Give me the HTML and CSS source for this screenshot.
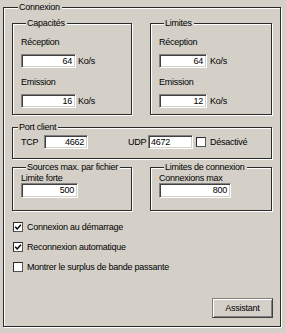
FILE: index.html
```html
<!DOCTYPE html>
<html lang="fr">
<head>
<meta charset="utf-8">
<title>Connexion</title>
<link rel="stylesheet" href="styles.css">
</head>
<body>
<div class="dialog">
  <div class="group outer">
    <span class="title">Connexion</span>

    <div class="row2 top">
      <div class="group speed">
        <span class="title">Capacités</span>
        <div class="label l1">Réception</div>
        <div class="fieldrow"><span class="field num w55">64</span><span class="unit">Ko/s</span></div>
        <div class="label l2">Emission</div>
        <div class="fieldrow"><span class="field num w55">16</span><span class="unit">Ko/s</span></div>
      </div>
      <div class="group speed">
        <span class="title">Limites</span>
        <div class="label l1">Réception</div>
        <div class="fieldrow"><span class="field num w48">64</span><span class="unit u2">Ko/s</span></div>
        <div class="label l2">Emission</div>
        <div class="fieldrow"><span class="field num w48">12</span><span class="unit u2">Ko/s</span></div>
      </div>
    </div>

    <div class="group port">
      <span class="title">Port client</span>
      <div class="portrow">
        <span class="plabel">TCP</span>
        <span class="field num w44">4662</span>
        <span class="plabel udp">UDP</span>
        <span class="field left w45">4672</span>
        <span class="check"></span>
        <span class="ctext">Désactivé</span>
      </div>
    </div>

    <div class="row2 bottom">
      <div class="group small">
        <span class="title">Sources max. par fichier</span>
        <div class="slabel">Limite forte</div>
        <span class="field num w57">500</span>
      </div>
      <div class="group small">
        <span class="title">Limites de connexion</span>
        <div class="slabel">Connexions max</div>
        <span class="field num w72">800</span>
      </div>
    </div>

    <div class="checks">
      <div class="crow"><span class="check on"><svg viewBox="0 0 8 8" width="8" height="8"><path d="M1.2 3.8 L3.2 5.9 L6.9 1.8" fill="none" stroke="#000" stroke-width="1.5"/></svg></span><span class="ctext">Connexion au démarrage</span></div>
      <div class="crow"><span class="check on"><svg viewBox="0 0 8 8" width="8" height="8"><path d="M1.2 3.8 L3.2 5.9 L6.9 1.8" fill="none" stroke="#000" stroke-width="1.5"/></svg></span><span class="ctext">Reconnexion automatique</span></div>
      <div class="crow"><span class="check"></span><span class="ctext">Montrer le surplus de bande passante</span></div>
    </div>

    <div class="actions"><span class="btn">Assistant</span></div>
  </div>
</div>
</body>
</html>
```

FILE: styles.css
```css
html, body {
  margin: 0;
  padding: 0;
}
body {
  width: 286px;
  height: 333px;
  overflow: hidden;
  background: #d4d0c8;
  color: #000;
  font-family: "Liberation Sans", Arial, sans-serif;
  font-size: 9px;
  line-height: 11px;
  letter-spacing: -0.25px;
}
.dialog {
  padding: 7px 0 0 3px;
}
.group {
  box-sizing: border-box;
  border: 1px solid #2a2a2a;
  box-shadow: inset 1px 1px 0 #fff, 1px 1px 0 #fff;
}
.title {
  display: block;
  width: fit-content;
  height: 11px;
  margin: -6px 0 0 5px;
  padding: 0 2px 0 1px;
  background: #d4d0c8;
  white-space: nowrap;
}
.outer {
  width: 278px;
  height: 320px;
  padding: 0 8px;
  display: flex;
  flex-direction: column;
}
.outer > .title {
  margin-left: 6px;
}
.row2 {
  display: grid;
  grid-template-columns: 120px 122px;
  column-gap: 18px;
}
.row2.top {
  margin-top: 10px;
}
.speed {
  height: 92px;
  padding-left: 8px;
}
.label.l1 { margin-top: 8px; }
.label.l2 { margin-top: 9px; }
.fieldrow {
  display: flex;
  align-items: center;
  margin-top: 6px;
}
.field {
  display: block;
  box-sizing: border-box;
  height: 14px;
  line-height: 12px;
  background: #fff;
  border: 1px solid;
  border-color: #808080 #fff #fff #808080;
  box-shadow: inset 1px 1px 0 #404040, inset -1px -1px 0 #d4d0c8;
  white-space: nowrap;
}
.field.num { text-align: right; padding-right: 3px; }
.field.left { text-align: left; padding-left: 2px; }
.w55 { width: 55px; }
.w48 { width: 48px; }
.w44 { width: 44px; }
.w45 { width: 45px; }
.w57 { width: 57px; height: 15px; line-height: 13px; }
.w72 { width: 72px; height: 15px; line-height: 13px; }
.unit { margin-left: 2px; }
.unit.u2 { margin-left: 3px; }

.port {
  height: 32px;
  margin-top: 12px;
}
.portrow {
  display: flex;
  align-items: center;
  height: 14px;
  margin-top: 2px;
  padding-left: 8px;
}
.plabel { width: 23px; }
.plabel.udp { width: 20px; margin-left: 40px; }
.check {
  display: flex;
  align-items: center;
  justify-content: center;
  box-sizing: border-box;
  width: 10px;
  height: 10px;
  flex: none;
  background: #fff;
  border: 1px solid #2a2a2a;
  border-right-color: #555;
  border-bottom-color: #555;
}
.portrow .check { margin-left: 3px; }
.ctext { margin-left: 4px; white-space: nowrap; }

.row2.bottom {
  margin-top: 8px;
}
.small {
  height: 44px;
  padding-left: 8px;
}
.slabel {
  line-height: 10px;
}

.checks {
  margin-top: 10px;
  margin-left: 1px;
  display: flex;
  flex-direction: column;
  gap: 8px;
}
.crow {
  display: flex;
  align-items: center;
  height: 12px;
}

.actions {
  margin-top: auto;
  margin-bottom: 8px;
  margin-right: -1px;
  display: flex;
  justify-content: flex-end;
}
.btn {
  box-sizing: border-box;
  width: 61px;
  height: 20px;
  line-height: 18px;
  text-align: center;
  border: 1px solid #404040;
  border-top-color: #808080;
  border-left-color: #808080;
  box-shadow: inset 1px 1px 0 #fff, inset -1px -1px 0 #808080;
}
```
